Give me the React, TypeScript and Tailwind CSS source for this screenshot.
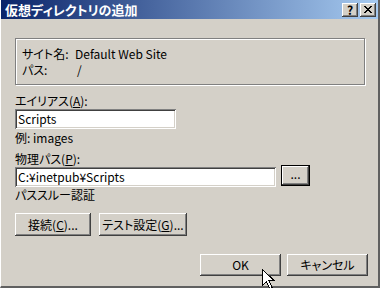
import React from "react";

const btn =
  "flex items-center justify-center bg-[#d4d0c8] text-black shadow-[inset_-1px_-1px_#404040,inset_1px_1px_#ffffff,inset_-2px_-2px_#808080,inset_2px_2px_#d4d0c8]";
const field =
  "flex items-center bg-white px-[3px] text-black shadow-[inset_1px_1px_#808080,inset_-1px_-1px_#ffffff,inset_2px_2px_#404040,inset_-2px_-2px_#d4d0c8]";

function Cursor() {
  return (
    <svg
      className="absolute left-[262px] top-[269px]"
      width="13"
      height="21"
      viewBox="0 0 13 21"
    >
      <path
        d="M0.5 0.5 L0.5 16.5 L4.5 12.5 L7.5 19.5 L10 18.5 L7 11.5 L12 11.5 Z"
        fill="#ffffff"
        stroke="#000000"
        strokeWidth="1"
        shapeRendering="crispEdges"
      />
    </svg>
  );
}

export default function App() {
  return (
    <div
      className="relative w-[380px] h-[288px] overflow-hidden bg-[#d4d0c8] text-[12px] leading-[16px] text-black [font-feature-settings:'palt']"
      style={{ fontFamily: '"Noto Sans CJK JP", "Noto Sans", sans-serif' }}
    >
      <div className="flex h-full flex-col border-l border-l-white border-r-2 border-r-[#606060] border-b-2 border-b-[#606060]">
        {/* title bar */}
        <div className="flex h-[19px] items-center justify-between bg-[linear-gradient(90deg,#0a246a,#a6caf0)] pl-[4px] pr-[2px]">
          <span className="text-[13px] font-bold leading-[19px] text-white">
            仮想ディレクトリの追加
          </span>
          <div className="flex items-center gap-[2px]">
            <div className={`${btn} h-[14px] w-[16px] text-[12px] font-bold leading-none`}>?</div>
            <div className={`${btn} h-[14px] w-[16px]`}>
              <svg width="8" height="7" viewBox="0 0 8 7" shapeRendering="crispEdges">
                <path d="M0 0h2v1H0zM6 0h2v1H6zM1 1h2v1H1zM5 1h2v1H5zM2 2h4v1H2zM3 3h2v1H3zM2 4h4v1H2zM1 5h2v1H1zM5 5h2v1H5zM0 6h2v1H0zM6 6h2v1H6z" fill="#000" />
              </svg>
            </div>
          </div>
        </div>

        <div className="flex flex-col pl-[14px]">
          {/* group box */}
          <div className="mt-[19px] h-[47px] w-[350px] border border-[#808080] shadow-[inset_1px_1px_#ffffff,1px_1px_#ffffff] pl-[6px] pt-[7px]">
            <div className="grid grid-cols-[53px_1fr]">
              <span>サイト名:</span>
              <span>Default Web Site</span>
              <span>パス:</span>
              <span className="pl-[2px]">/</span>
            </div>
          </div>

          <div className="mt-[8px] h-[16px]">
            エイリアス(<span className="underline">A</span>):
          </div>
          <div className={`${field} h-[20px] w-[161px]`}>Scripts</div>
          <div className="mt-[1px] h-[16px]">例: images</div>
          <div className="mt-[5px] h-[16px]">
            物理パス(<span className="underline">P</span>):
          </div>
          <div className="flex items-start">
            <div className={`${field} h-[20px] w-[261px]`}>C:¥inetpub¥Scripts</div>
            <div className="-mt-[2px] ml-[5px] h-[21px] w-[29px] border border-black">
              <div className={`${btn} h-full w-full pb-[3px] leading-none`}>...</div>
            </div>
          </div>
          <div className="h-[16px]">パススルー認証</div>

          <div className="mt-[10px] flex gap-[8px]">
            <div className={`${btn} h-[23px] w-[76px]`}>
              接続(<span className="underline">C</span>)...
            </div>
            <div className={`${btn} h-[23px] w-[88px]`}>
              テスト設定(<span className="underline">G</span>)...
            </div>
          </div>

          <div className="ml-[185px] mt-[18px] flex gap-[6px]">
            <div className={`${btn} h-[22px] w-[81px]`}>OK</div>
            <div className={`${btn} h-[22px] w-[81px]`}>キャンセル</div>
          </div>
        </div>
      </div>
      <Cursor />
    </div>
  );
}
